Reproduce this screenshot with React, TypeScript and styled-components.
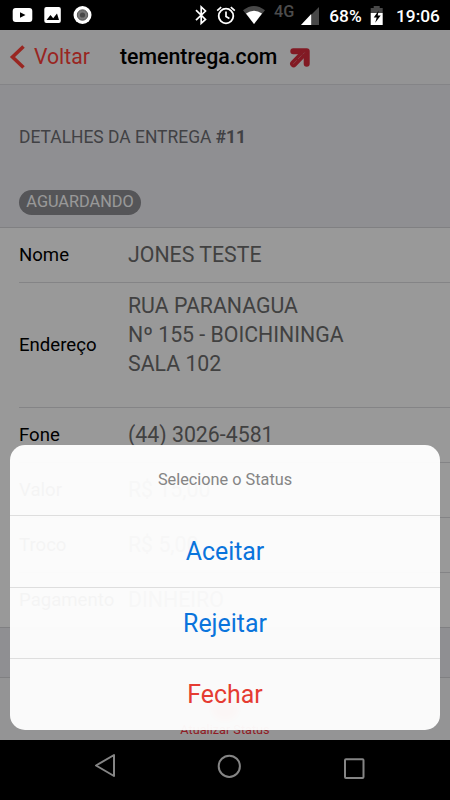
import React from "react";
import styled, { createGlobalStyle } from "styled-components";

const Global = createGlobalStyle`
  * { box-sizing: border-box; }
  body { margin: 0; background: #000; font-family: Roboto, "Liberation Sans", sans-serif; }
`;

const Phone = styled.div`
  width: 450px;
  height: 800px;
  display: flex;
  flex-direction: column;
  background: #000;
  overflow: hidden;
`;

const StatusBar = styled.div`
  height: 30px;
  flex: none;
  svg { display: block; }
`;

const StatusText = styled.text<{ $size?: number; $dim?: boolean }>`
  font-family: Roboto, sans-serif;
  font-size: ${(p) => p.$size ?? 18}px;
  font-weight: 500;
  fill: ${(p) => (p.$dim ? "#4c4c4c" : "#fff")};
`;

const Screen = styled.main`
  position: relative;
  height: 710px;
  flex: none;
  display: flex;
  flex-direction: column;
  background: #efeff4;
  overflow: hidden;
`;

const Header = styled.header`
  height: 55px;
  flex: none;
  display: flex;
  align-items: center;
  padding-left: 9px;
  background: #f7f7f8;
  border-bottom: 1px solid #dcdce2;
`;

const Back = styled.div`
  width: 111px;
  display: flex;
  align-items: center;
  gap: 8px;
  color: #ff4038;
  font-size: 21.2px;
  line-height: 28px;
`;

const Brand = styled.h1`
  margin: 0;
  width: 169px;
  font-size: 21.3px;
  line-height: 28px;
  font-weight: 500;
  color: #000;
`;

const Intro = styled.section`
  height: 142px;
  flex: none;
  padding: 40px 19px 0;
  display: flex;
  flex-direction: column;
  align-items: flex-start;
  gap: 40px;
`;

const IntroTitle = styled.div`
  font-size: 17.45px;
  line-height: 25px;
  color: #6d6d72;
  white-space: nowrap;
  b { font-weight: 700; }
`;

const Badge = styled.span`
  height: 25px;
  width: 122px;
  border-radius: 13px;
  background: #8e8e93;
  color: #fff;
  text-align: center;
  font-size: 16.3px;
  line-height: 23px;
`;

const List = styled.section`
  flex: none;
  height: 401px;
  background: #fff;
  border-top: 1px solid #d5d5d9;
  border-bottom: 1px solid #d5d5d9;
  padding-left: 19px;
`;

const Row = styled.div<{ $height?: number }>`
  height: ${(p) => p.$height ?? 55}px;
  display: flex;
  align-items: center;
  border-bottom: 1px solid #dddde0;
  &:last-child { border-bottom: 0; height: 54px; }
`;

const Label = styled.span`
  width: 109px;
  font-size: 18.6px;
  color: #000;
`;

const Value = styled.span<{ $lift?: number }>`
  font-size: 21.3px;
  line-height: 29px;
  color: #6d6d6d;
  white-space: pre-line;
  padding-bottom: ${(p) => p.$lift ?? 2}px;
`;

const Toolbar = styled.footer`
  margin-top: auto;
  height: 63px;
  flex: none;
  display: flex;
  flex-direction: column;
  align-items: center;
  padding-top: 19px;
  background: #f7f7f8;
  border-top: 1px solid #d5d5d9;
  color: #f0303b;
  font-size: 12.7px;
  line-height: 17px;
`;

const Dot = styled.span`
  width: 28px;
  height: 24px;
  border-radius: 50%;
  background: #ff3b30;
  opacity: 0.8;
  filter: blur(3px);
`;

const Backdrop = styled.div`
  position: absolute;
  inset: 0;
  background: rgba(0, 0, 0, 0.4);
`;

const Sheet = styled.div`
  position: absolute;
  left: 10px;
  right: 10px;
  bottom: 10px;
  height: 285px;
  border-radius: 15px;
  background: rgba(255, 255, 255, 0.955);
  overflow: hidden;
  display: flex;
  flex-direction: column;
`;

const SheetTitle = styled.div`
  height: 70px;
  flex: none;
  display: flex;
  align-items: center;
  justify-content: center;
  font-size: 16.3px;
  color: #858585;
  padding-bottom: 2px;
`;

const SheetButton = styled.button<{ $danger?: boolean }>`
  flex: 1;
  border: 0;
  border-top: 1px solid #dedede;
  background: none;
  padding: 1px 0 0;
  font-family: inherit;
  font-size: 24.9px;
  line-height: 30px;
  color: ${(p) => (p.$danger ? "#e53c32" : "#0a74dc")};
`;

const NavBar = styled.nav`
  height: 60px;
  flex: none;
`;

const fields = [
  { label: "Nome", value: "JONES TESTE" },
  { label: "Endereço", value: "RUA PARANAGUA\nNº 155 - BOICHININGA\nSALA 102", height: 125, lift: 22 },
  { label: "Fone", value: "(44) 3026-4581" },
  { label: "Valor", value: "R$ 15,00" },
  { label: "Troco", value: "R$ 5,00" },
  { label: "Pagamento", value: "DINHEIRO" },
];

const StatusIcons = () => (
  <svg width="450" height="30" viewBox="0 0 450 30" fill="none">
    <rect x="12.7" y="8" width="19.6" height="14" rx="3" fill="#fff" />
    <path d="M20 12.2v5.6l5.5-2.8z" fill="#000" />
    <rect x="44.3" y="7" width="16.5" height="16" rx="2" fill="#fff" />
    <path d="M46.5 20l4-5 2.7 3.2 3.8-4.7 2 6.5z" fill="#000" />
    <circle cx="82.5" cy="15" r="9" fill="#fff" />
    <circle cx="82.5" cy="15" r="5.2" fill="#777" stroke="#555" strokeWidth="1" />
    <circle cx="82.5" cy="15" r="2.6" fill="#484848" />
    <path d="M196 10.2l9.5 9.2-4.3 4V7l4.3 4-9.5 9.2" stroke="#fff" strokeWidth="1.7" />
    <circle cx="226" cy="16" r="7.3" stroke="#fff" strokeWidth="1.8" />
    <path d="M226 11.5V16.5l3.4 2M217.2 10.7l4-3.5M234.8 10.7l-4-3.5" stroke="#fff" strokeWidth="1.7" />
    <path d="M243 10.3Q254 1.8 265 10.3L254 24z" fill="#484848" />
    <path d="M246 13.5Q254 8 262 13.5L254 24z" fill="#fff" />
    <StatusText x="274" y="16.5" $size={16.3} $dim>4G</StatusText>
    <path d="M319 7v18h-18z" fill="#484848" />
    <path d="M301 25l10.2-11v11z" fill="#fff" />
    <StatusText x="329.3" y="22" $size={17.3}>68%</StatusText>
    <path d="M370.7 8h3V6h6v2h3v5h-12z" fill="#484848" />
    <path d="M370.7 13h12v12h-12z" fill="#fff" />
    <path d="M378.7 10.5l-5 7h3l-1.5 5.3 5.5-7.2h-3z" fill="#000" />
    <StatusText x="396" y="22" $size={17.3}>19:06</StatusText>
  </svg>
);

const BackIcon = () => (
  <svg width="17" height="26" viewBox="0 0 17 26">
    <path d="M14.5 2.5L3.5 13l11 10.5" fill="none" stroke="currentColor" strokeWidth="3.6" />
  </svg>
);

const BrandArrow = () => (
  <svg width="22" height="22" viewBox="0 0 22 22" fill="none">
    <path d="M4.3 5.2H17.7v12.6" stroke="#d92c3c" strokeWidth="6" strokeLinecap="round" strokeLinejoin="round" />
    <path d="M4.6 17.7L15 7" stroke="#d92c3c" strokeWidth="7" strokeLinecap="round" />
    <path d="M4.2 17.9l3.6-3.6M9 13l3.6-3.6M13.8 8.3l1.8-1.8" stroke="#e0707a" strokeWidth="0.9" />
  </svg>
);

export default function App() {
  return (
    <>
      <Global />
      <Phone>
        <StatusBar><StatusIcons /></StatusBar>
        <Screen>
          <Header>
            <Back><BackIcon />Voltar</Back>
            <Brand>tementrega.com</Brand>
            <BrandArrow />
          </Header>
          <Intro>
            <IntroTitle>DETALHES DA ENTREGA <b>#11</b></IntroTitle>
            <Badge>AGUARDANDO</Badge>
          </Intro>
          <List>
            {fields.map((f) => (
              <Row key={f.label} $height={f.height}>
                <Label>{f.label}</Label>
                <Value $lift={f.lift}>{f.value}</Value>
              </Row>
            ))}
          </List>
          <Toolbar><Dot />Atualizar Status</Toolbar>
          <Backdrop />
          <Sheet role="dialog">
            <SheetTitle>Selecione o Status</SheetTitle>
            <SheetButton>Aceitar</SheetButton>
            <SheetButton>Rejeitar</SheetButton>
            <SheetButton $danger>Fechar</SheetButton>
          </Sheet>
        </Screen>
        <NavBar>
          <svg width="450" height="60" viewBox="0 0 450 60" fill="none" stroke="#858585" strokeWidth="2">
            <path d="M114 15v21L96 25.5z" strokeLinejoin="round" />
            <circle cx="229.3" cy="26.3" r="10.6" />
            <rect x="345" y="19.3" width="18.5" height="18.7" rx="1" />
          </svg>
        </NavBar>
      </Phone>
    </>
  );
}
